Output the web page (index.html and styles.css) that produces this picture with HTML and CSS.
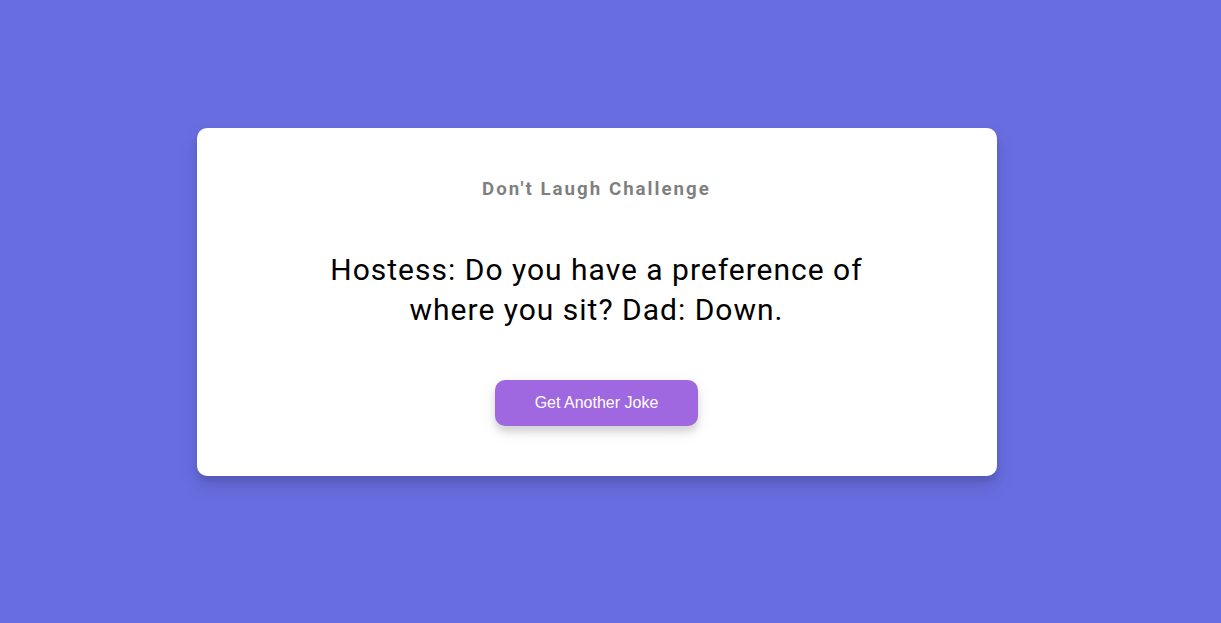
FILE: index.html
```html
<!DOCTYPE html>
<html lang="en">
<head>
<meta charset="UTF-8">
<title>Dad Jokes</title>
<link rel="stylesheet" href="styles.css">
</head>
<body>
  <div class="container">
    <h3>Don't Laugh Challenge</h3>
    <div class="joke">Hostess: Do you have a preference of where you sit? Dad: Down.</div>
    <button class="btn">Get Another Joke</button>
  </div>
</body>
</html>
```
FILE: styles.css
```css
* { box-sizing: border-box; }

body {
  background-color: #686de0;
  font-family: Roboto, "Liberation Sans", sans-serif;
  display: flex;
  flex-direction: column;
  align-items: center;
  justify-content: center;
  height: 100vh;
  overflow: hidden;
  margin: 0;
  padding: 10px 34px 30px 6px;
}

.container {
  background-color: #fff;
  border-radius: 10px;
  box-shadow: 0 10px 20px rgba(0, 0, 0, 0.1), 0 6px 6px rgba(0, 0, 0, 0.1);
  padding: 50px 20px;
  text-align: center;
  max-width: 100%;
  width: 800px;
}

h3 {
  margin: 0;
  opacity: 0.5;
  letter-spacing: 2px;
  font-size: 18.72px;
}

.joke {
  font-size: 30px;
  letter-spacing: 1px;
  line-height: 40px;
  margin: 50px auto;
  max-width: 600px;
}

.btn {
  background-color: #9f68e0;
  color: #fff;
  border: 0;
  border-radius: 10px;
  box-shadow: 0 5px 15px rgba(0, 0, 0, 0.1), 0 6px 6px rgba(0, 0, 0, 0.1);
  padding: 14px 40px;
  font-family: "Liberation Sans", Arial, sans-serif;
  font-size: 16px;
  cursor: pointer;
}
```
